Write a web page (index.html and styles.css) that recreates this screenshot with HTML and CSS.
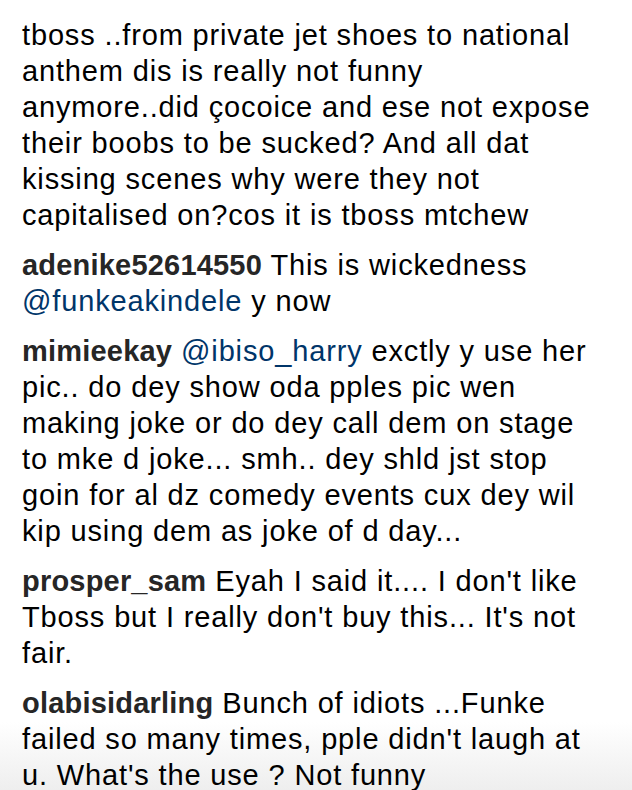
FILE: index.html
```html
<!DOCTYPE html>
<html>
<head>
<meta charset="utf-8">
<link rel="stylesheet" href="styles.css">
</head>
<body>
<div class="comments">
  <p class="comment">tboss ..from private jet shoes to national<br>anthem dis is really not funny<br>anymore..did çocoice and ese not expose<br>their boobs to be sucked? And all dat<br>kissing scenes why were they not<br>capitalised on?cos it is tboss mtchew</p>
  <p class="comment"><span class="user">adenike52614550</span> This is wickedness<br><span class="mention">@funkeakindele</span> y now</p>
  <p class="comment"><span class="user">mimieekay</span> <span class="mention">@ibiso_harry</span> exctly y use her<br>pic.. do dey show oda pples pic wen<br>making joke or do dey call dem on stage<br>to mke d joke... smh.. dey shld jst stop<br>goin for al dz comedy events cux dey wil<br>kip using dem as joke of d day...</p>
  <p class="comment"><span class="user">prosper_sam</span> Eyah I said it.... I don't like<br>Tboss but I really don't buy this... It's not<br>fair.</p>
  <p class="comment"><span class="user">olabisidarling</span> Bunch of idiots ...Funke<br>failed so many times, pple didn't laugh at<br>u. What's the use ? Not funny</p>
</div>
</body>
</html>
```

FILE: styles.css
```css
html, body {
  margin: 0;
  padding: 0;
}
body {
  width: 632px;
  height: 790px;
  overflow: hidden;
  background: linear-gradient(to bottom, #ffffff 0, #ffffff 722px, #eeeeee 790px);
  font-family: "Liberation Sans", Arial, sans-serif;
  color: #000;
}
.comments {
  display: flex;
  flex-direction: column;
  gap: 14px;
  padding: 17px 0 0 22px;
}
.comment {
  margin: 0;
  font-size: 29px;
  line-height: 36px;
  letter-spacing: 0.85px;
  white-space: nowrap;
}
.user {
  font-weight: bold;
  color: #262626;
  letter-spacing: 0.2px;
}
.mention {
  color: #003569;
}
```
